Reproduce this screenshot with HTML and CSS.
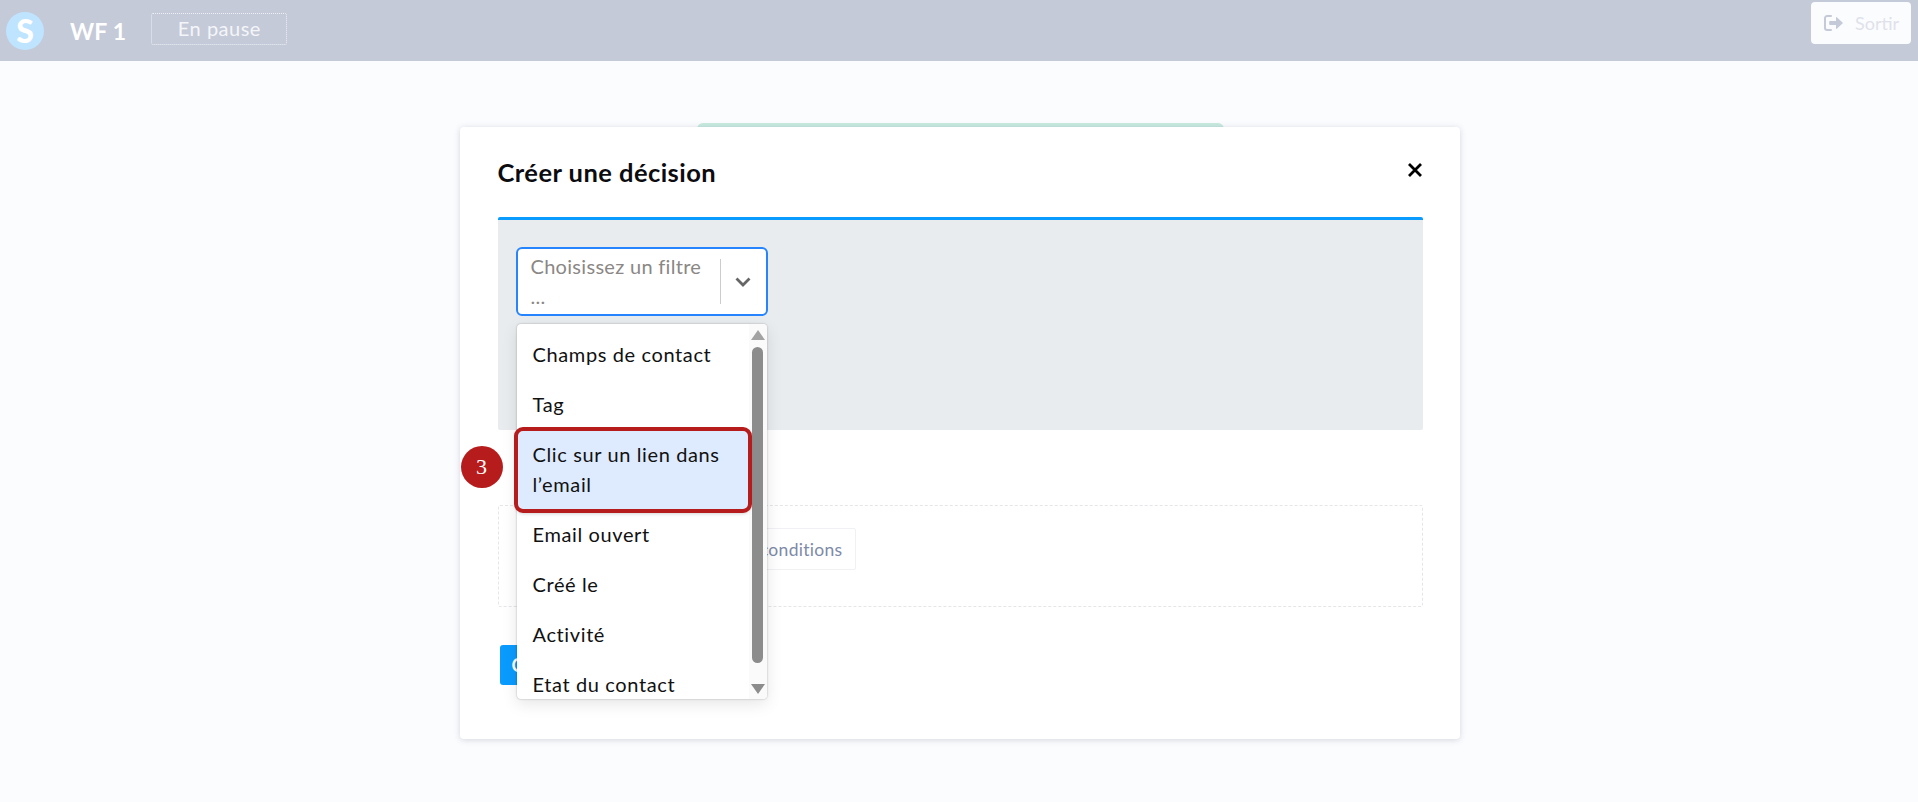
FILE: index.html
```html
<!DOCTYPE html>
<html lang="fr">
<head>
<meta charset="utf-8">
<title>WF 1</title>
<link rel="stylesheet" href="styles.css">
</head>
<body>
<header class="topbar">
  <div class="brand">
    <span class="logo">S</span>
    <span class="wf-name">WF 1</span>
    <span class="status">En pause</span>
  </div>
  <button class="exit" type="button">
    <svg class="exit-icon" viewBox="0 0 20 16" width="20" height="16" aria-hidden="true">
      <path d="M7 1H3.2A2.2 2.2 0 0 0 1 3.2v9.6A2.2 2.2 0 0 0 3.2 15H7" fill="none" stroke="currentColor" stroke-width="2" stroke-linecap="round"/>
      <path d="M6 6h6V2.6a.5.5 0 0 1 .85-.35L19 8l-6.15 5.75A.5.5 0 0 1 12 13.4V10H6a.8.8 0 0 1-.8-.8V6.8A.8.8 0 0 1 6 6z" fill="currentColor"/>
    </svg>
    <span>Sortir</span>
  </button>
</header>

<main class="stage">
  <div class="modal-wrap">
    <div class="peek"></div>
    <section class="modal">
      <div class="modal-head">
        <h1 class="modal-title">Créer une décision</h1>
        <svg class="close" viewBox="0 0 16 16" width="16" height="16" aria-hidden="true">
          <path d="M2 2l12 12M14 2L2 14" fill="none" stroke="currentColor" stroke-width="2.8"/>
        </svg>
      </div>
      <div class="panel">
        <div class="select">
          <div class="select-value">Choisissez un filtre ...</div>
          <div class="select-sep"></div>
          <svg class="chevron" viewBox="0 0 16 10" width="16" height="10" aria-hidden="true">
            <path d="M1.5 1.5l6.500 6.500 6.500-6.500" fill="none" stroke="currentColor" stroke-width="2.800"/>
          </svg>
        </div>
      </div>
      <div class="conditions">
        <span class="cond-btn">conditions</span>
      </div>
      <button class="primary" type="button">Créer</button>

      <div class="menu">
        <ul class="menu-list">
          <li class="menu-item">Champs de contact</li>
          <li class="menu-item">Tag</li>
          <li class="menu-item is-active">Clic sur un lien dans l’email<span class="badge">3</span></li>
          <li class="menu-item">Email ouvert</li>
          <li class="menu-item">Créé le</li>
          <li class="menu-item">Activité</li>
          <li class="menu-item is-last">Etat du contact</li>
        </ul>
        <div class="scroll">
          <span class="arrow-up"></span>
          <span class="thumb"></span>
          <span class="arrow-down"></span>
        </div>
      </div>
    </section>
  </div>
</main>
</body>
</html>
```

FILE: styles.css
```css
* { box-sizing: border-box; }

html, body { height: 100%; }

body {
  margin: 0;
  background: #fbfcfe;
  font-family: "Lato", "Liberation Sans", sans-serif;
  color: #111;
  overflow: hidden;
}

.topbar {
  height: 61px;
  background: #c5cad8;
  display: flex;
  justify-content: space-between;
  align-items: flex-start;
  padding: 2px 7px 0 6px;
}

.brand {
  display: flex;
  align-items: center;
  height: 57px;
}

.logo {
  width: 38px;
  height: 38px;
  border-radius: 50%;
  background: #bfe4ff;
  color: #fff;
  font-size: 32px;
  font-weight: 900;
  line-height: 37px;
  text-align: center;
}

.wf-name {
  margin-left: 26px;
  color: #fff;
  font-size: 23px;
  font-weight: 700;
  letter-spacing: 0.2px;
}

.status {
  margin-left: 25px;
  margin-top: -3px;
  width: 136px;
  height: 32px;
  border: 1px dotted #eef0f5;
  border-radius: 2px;
  color: #f4f5f9;
  font-size: 20px;
  letter-spacing: 0.5px;
  line-height: 29px;
  text-align: center;
}

.exit {
  width: 100px;
  height: 42px;
  border: 0;
  border-radius: 4px;
  background: #fbfcfe;
  display: flex;
  align-items: center;
  gap: 11px;
  padding: 0 0 0 13px;
  font: inherit;
  font-size: 18px;
  color: #dfe2ea;
}

.exit-icon { color: #c5cad8; }

.stage {
  padding-top: 66px;
  display: flex;
  justify-content: center;
}

.modal-wrap {
  position: relative;
  width: 1000px;
  margin-left: 1px;
}

.peek {
  position: absolute;
  left: 237px;
  top: -4px;
  width: 527px;
  height: 10px;
  background: #c8eadf;
  border-radius: 6px 6px 0 0;
}

.modal {
  position: relative;
  height: 612px;
  background: #fff;
  border-radius: 4px;
  box-shadow: 0 1px 6px rgba(70, 80, 110, 0.22);
  padding: 0 37px 0 38px;
}

.modal-head {
  height: 90px;
  display: flex;
  justify-content: space-between;
  align-items: flex-start;
}

.modal-title {
  margin: 30px 0 0;
  font-size: 25.5px;
  font-weight: 700;
  letter-spacing: 0.45px;
  line-height: 30px;
  color: #0c0c10;
}

.close {
  margin-top: 35px;
  color: #000;
}

.panel {
  height: 213px;
  background: #e9ecef;
  border-top: 3px solid #0a9bff;
  border-radius: 2px;
  padding: 27px 0 0 18px;
}

.select {
  width: 252px;
  height: 69px;
  background: #fff;
  border: 2px solid #2684ff;
  border-radius: 6px;
  display: flex;
  align-items: center;
  padding-left: 13px;
}

.select-value {
  width: 177px;
  margin-top: -2px;
  color: #8a8785;
  font-size: 20px;
  letter-spacing: 0.3px;
  line-height: 30px;
}

.select-sep {
  width: 1px;
  height: 45px;
  background: #ccc;
  margin-left: 12px;
}

.chevron {
  margin-left: 14px;
  margin-top: 1px;
  color: #666;
}

.conditions {
  height: 102px;
  margin-top: 75px;
  border: 1px dashed #e4e6ea;
  border-radius: 2px;
  padding: 22px 0 0 150px;
  display: flex;
  align-items: flex-start;
}

.cond-btn {
  width: 207px;
  height: 42px;
  border: 1px solid #eff1f5;
  border-radius: 2px;
  padding-right: 12px;
  color: #7d8aa8;
  font-size: 17.5px;
  letter-spacing: 0.3px;
  line-height: 42px;
  text-align: right;
}

.primary {
  display: block;
  width: 110px;
  height: 40px;
  margin: 38px 0 0 2px;
  border: 0;
  border-radius: 3px;
  background: #0a9bff;
  color: #fff;
  font: inherit;
  font-size: 18px;
  font-weight: 700;
  text-align: left;
  padding-left: 12px;
}

.menu {
  position: absolute;
  left: 57px;
  top: 197px;
  width: 250px;
  height: 375px;
  display: flex;
  background: #fff;
  border-radius: 4px;
  box-shadow: 0 0 2px rgba(0, 0, 0, 0.32), 0 5px 16px rgba(0, 0, 0, 0.1);
}

.menu-list {
  list-style: none;
  margin: 0;
  padding: 6px 0 0;
  width: 232px;
}

.menu-item {
  position: relative;
  padding: 9px 16px 11px;
  font-size: 20px;
  letter-spacing: 0.62px;
  line-height: 30px;
  color: #111;
}

.menu-item.is-last { padding-bottom: 0; }

.menu-item.is-active {
  background: #deebff;
  border-radius: 6px;
  outline: 4px solid #b71c1c;
  outline-offset: -1px;
  box-shadow: 0 3px 4px rgba(0, 0, 0, 0.25);
}

.badge {
  position: absolute;
  left: -56px;
  top: 16px;
  width: 42px;
  height: 42px;
  border-radius: 50%;
  background: #b71c1c;
  color: #fff;
  font-family: "Liberation Serif", serif;
  font-size: 22px;
  letter-spacing: 0;
  line-height: 42px;
  text-align: center;
}

.scroll {
  flex: 1;
  background: #fafafa;
  border-radius: 0 4px 4px 0;
  display: flex;
  flex-direction: column;
  align-items: center;
  padding-top: 6px;
}

.arrow-up,
.arrow-down {
  width: 0;
  height: 0;
  border-left: 7px solid transparent;
  border-right: 7px solid transparent;
}

.arrow-up { border-bottom: 10px solid #a3a3a3; }

.arrow-down {
  border-top: 10px solid #8c8c8c;
  margin-top: 21px;
}

.thumb {
  width: 11px;
  height: 316px;
  margin-top: 7px;
  background: #8c8c8c;
  border-radius: 6px;
}
```
